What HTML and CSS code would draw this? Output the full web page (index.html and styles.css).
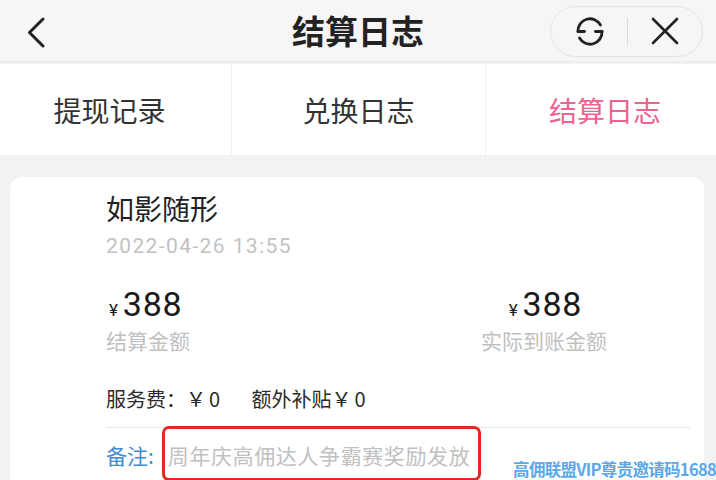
FILE: index.html
```html
<!DOCTYPE html>
<html lang="zh-CN">
<head>
<meta charset="utf-8">
<title>结算日志</title>
<link rel="stylesheet" href="styles.css">
</head>
<body>
<div class="page">
  <header class="header">
    <div class="back">
      <svg width="18" height="31" viewBox="0 0 18 31"><polyline points="16,2 2.5,15.5 16,29" fill="none" stroke="#222" stroke-width="3" stroke-linecap="round" stroke-linejoin="round"/></svg>
    </div>
    <div class="title">结算日志</div>
    <div class="capsule">
      <svg class="cap-icon" width="34" height="32" viewBox="0 0 34 32">
        <path d="M5 16.5 A12 12 0 0 1 27.5 10" fill="none" stroke="#222" stroke-width="2.8" stroke-linecap="round"/>
        <path d="M5 16.5 H11.5" fill="none" stroke="#222" stroke-width="2.8" stroke-linecap="round"/>
        <path d="M29 16.5 A12 12 0 0 1 6.5 23" fill="none" stroke="#222" stroke-width="2.8" stroke-linecap="round"/>
        <path d="M29 16.5 H22.5" fill="none" stroke="#222" stroke-width="2.8" stroke-linecap="round"/>
      </svg>
      <span class="cap-sep"></span>
      <svg class="cap-icon" width="28" height="28" viewBox="0 0 28 28">
        <path d="M2 2 L26 26 M26 2 L2 26" fill="none" stroke="#222" stroke-width="2.6" stroke-linecap="round"/>
      </svg>
    </div>
  </header>

  <nav class="tabs">
    <div class="tab first">提现记录</div>
    <div class="tab">兑换日志</div>
    <div class="tab active">结算日志</div>
  </nav>

  <section class="card">
    <div class="name">如影随形</div>
    <div class="date">2022-04-26 13:55</div>
    <div class="amounts">
      <div class="amount-col">
        <div class="amount"><span class="yen">¥</span>388</div>
        <div class="label">结算金额</div>
      </div>
      <div class="amount-col center">
        <div class="amount"><span class="yen">¥</span>388</div>
        <div class="label">实际到账金额</div>
      </div>
    </div>
    <div class="fees">
      <span>服务费：</span><span class="fee-val">￥0</span>
      <span class="fee-gap">额外补贴</span><span class="fee-val">￥0</span>
    </div>
    <div class="divider"></div>
    <div class="remark">
      <span class="remark-key">备注:</span>
      <span class="remark-text">周年庆高佣达人争霸赛奖励发放</span>
    </div>
  </section>

  <div class="watermark">高佣联盟VIP尊贵邀请码1688</div>
</div>
</body>
</html>
```

FILE: styles.css
```css
* { box-sizing: border-box; }
html, body { margin: 0; padding: 0; }
body {
  background: #f2f2f2;
  font-family: "Noto Sans CJK SC", "Noto Sans", sans-serif;
  color: #222;
}
.page {
  position: relative;
  width: 716px;
  height: 480px;
  overflow: hidden;
  background: #f2f2f2;
}
.header {
  height: 62px;
  background: #f6f6f6;
  display: grid;
  grid-template-columns: 1fr auto 1fr;
  align-items: center;
  padding-top: 3px;
  border-bottom: 1px solid #ececec;
}
.back {
  padding-left: 27px;
  display: flex;
  align-items: center;
}
.title {
  font-size: 33px;
  font-weight: 700;
  line-height: 40px;
  color: #222;
  margin-top: -4px;
}
.capsule {
  justify-self: end;
  margin-right: 13px;
  width: 153px;
  height: 51px;
  border: 1px solid #e4e4e4;
  border-radius: 26px;
  display: flex;
  align-items: center;
  justify-content: center;
  margin-top: -2px;
  padding-right: 2px;
}
.cap-icon { display: block; }
.cap-sep {
  width: 1px;
  height: 27px;
  background: #d8d8d8;
  margin: 0 23px 0 20px;
}
.tabs {
  margin-top: 2px;
  height: 91px;
  display: grid;
  grid-template-columns: 231px 1fr 231px;
  background: #fff;
}
.tab {
  display: flex;
  align-items: center;
  justify-content: center;
  font-size: 28px;
  color: #333;
  border-left: 1px solid #eeeeee;
}
.tab.first { border-left: none; padding-right: 12px; }
.tab.active { color: #ea6391; padding-left: 8px; }
.card {
  margin: 22px 12px 0 10px;
  background: #fff;
  border-radius: 12px;
  padding: 13px 14px 40px 96px;
}
.name {
  font-size: 28px;
  line-height: 36px;
  color: #222;
}
.date {
  margin-top: 5px;
  font-family: "Roboto", "Noto Sans", sans-serif;
  font-size: 21px;
  line-height: 30px;
  letter-spacing: 1.4px;
  color: #c2c2c2;
}
.amounts {
  margin-top: 23px;
  display: flex;
  justify-content: space-between;
  padding-right: 83px;
}
.amount-col.center { text-align: center; }
.amount {
  font-family: "Roboto", "Noto Sans", sans-serif;
  font-size: 34px;
  line-height: 40px;
  letter-spacing: 0.8px;
  color: #1a1a1a;
}
.yen {
  font-size: 17px;
  margin-right: 4px;
  margin-left: 3px;
}
.label {
  margin-top: -4px;
  font-size: 21px;
  line-height: 28px;
  color: #c0c0c0;
}
.fees {
  margin-top: 31px;
  font-size: 20px;
  line-height: 28px;
  color: #2a2a2a;
}
.fee-val { letter-spacing: 3px; }
.fee-gap { margin-left: 24px; }
.divider {
  margin-top: 14px;
  height: 1px;
  background: #e8e8e8;
}
.remark {
  margin-top: 13px;
  font-size: 21px;
  line-height: 28px;
  display: flex;
  align-items: center;
}
.remark-key { color: #3f8ad2; }
.remark-text {
  position: relative;
  margin-left: 14px;
  letter-spacing: 0.6px;
  color: #c0c0c0;
}
.remark-text::after {
  content: "";
  position: absolute;
  left: -6px;
  top: -15px;
  width: 313px;
  height: 49px;
  border: 3px solid #e5271f;
  border-radius: 7px;
}
.watermark {
  position: absolute;
  right: 0;
  bottom: 1px;
  font-size: 16.5px;
  line-height: 20px;
  font-weight: 700;
  color: #5aa8e8;
  letter-spacing: -0.7px;
  text-shadow: 0 0 1px #fff;
}
```
